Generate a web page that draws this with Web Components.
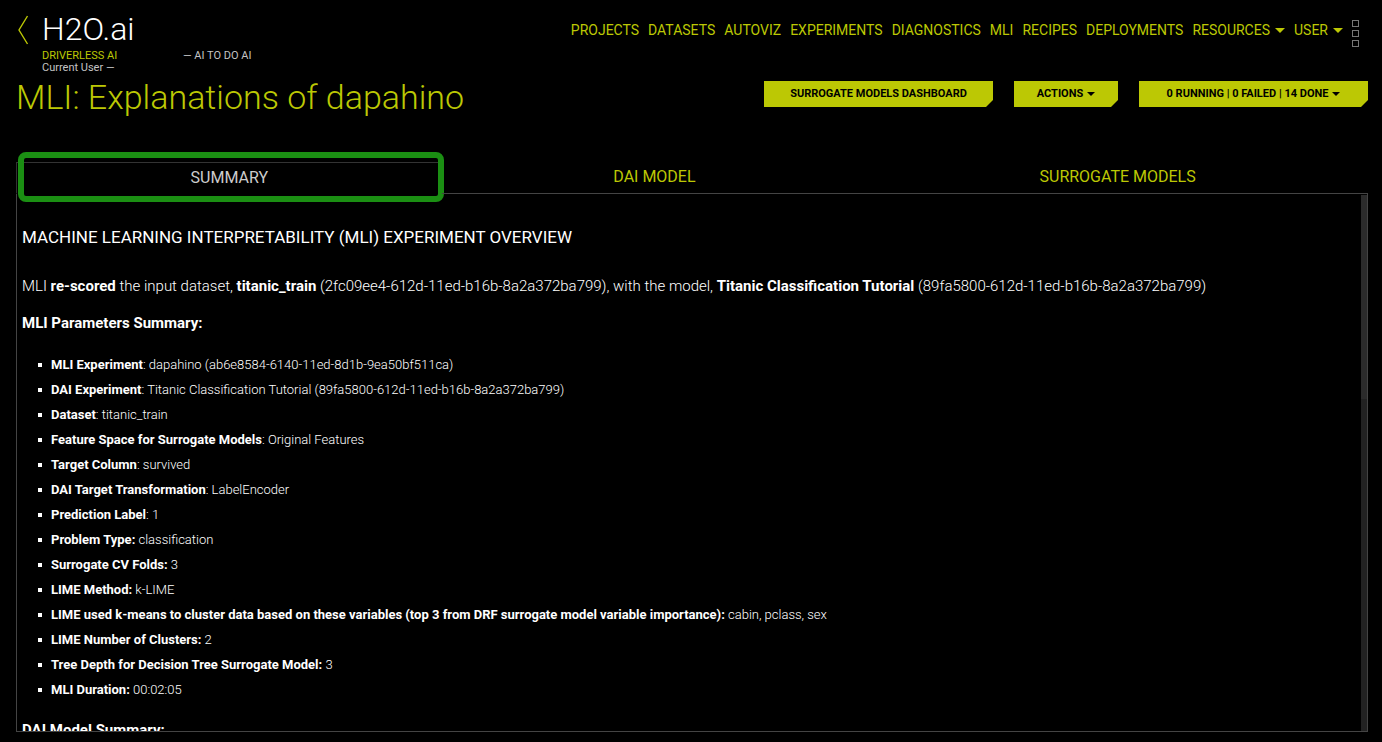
<!DOCTYPE html>
<html lang="en">
<head>
<meta charset="utf-8">
<meta name="viewport" content="width=device-width, initial-scale=1">
<title>H2O.ai Driverless AI</title>
<style>
  :root {
    --accent: #bcc804;
    --line: #444;
  }
  body {
    margin: 0;
    background: #000;
    color: #fff;
    font-family: Roboto, sans-serif;
  }
</style>
</head>
<body>
<mli-page></mli-page>

<script>
class BaseElement extends HTMLElement {
  constructor() {
    super();
    this.attachShadow({ mode: "open" }).innerHTML = this.render();
  }
}

customElements.define("brand-mark", class extends BaseElement {
  render() {
    return `<style>
      :host { display: flex; gap: 12px; padding-left: 2px; }
      a { display: block; height: 30px; margin-top: 15px; }
      svg { display: block; }
      .logo { font-size: 32px; line-height: 34px; height: 36px; color: #fff; padding-top: 12px; font-weight: 300; }
      .tags { display: grid; grid-template-columns: 141px auto; font-size: 11px; line-height: 12px; color: #c4c4c4; padding-top: 2px; }
      .product { color: var(--accent); }
    </style>
    <a href="#back" aria-label="Back"><svg width="12" height="30" viewBox="0 0 12 30" fill="none" stroke="#bcc804" stroke-width="1.4"><path d="M9.500 1 1 15 9.500 29"/></svg></a>
    <div>
      <div class="logo">H2O.ai</div>
      <div class="tags"><span class="product">DRIVERLESS AI</span><span>— AI TO DO AI</span><span>Current User —</span></div>
    </div>`;
  }
});

customElements.define("nav-link", class extends BaseElement {
  render() {
    const caret = this.hasAttribute("menu")
      ? `<svg width="10" height="5" viewBox="0 0 10 5"><path fill="currentColor" d="M0 0H10L5 5Z"/></svg>` : "";
    return `<style>
      :host { display: block; }
      a { display: flex; align-items: center; gap: 5px; color: var(--accent); text-decoration: none; font-size: 14px; line-height: 20px; white-space: nowrap; }
    </style><a href="#"><slot></slot>${caret}</a>`;
  }
});

customElements.define("main-nav", class extends BaseElement {
  render() {
    return `<style>
      :host { display: block; }
      nav { display: flex; gap: 9px; align-items: start; padding-top: 20px; }
      button { display: grid; gap: 3px; padding: 0; border: 0; background: none; }
      i { width: 5px; height: 5px; border: 1px solid #777; }
    </style>
    <nav aria-label="Main">
      <nav-link>PROJECTS</nav-link><nav-link>DATASETS</nav-link><nav-link>AUTOVIZ</nav-link>
      <nav-link>EXPERIMENTS</nav-link><nav-link>DIAGNOSTICS</nav-link><nav-link>MLI</nav-link>
      <nav-link>RECIPES</nav-link><nav-link>DEPLOYMENTS</nav-link>
      <nav-link menu>RESOURCES</nav-link><nav-link menu>USER</nav-link>
      <button aria-label="More"><i></i><i></i><i></i></button>
    </nav>`;
  }
});

customElements.define("cut-button", class extends BaseElement {
  render() {
    const caret = this.hasAttribute("menu")
      ? `<svg width="8" height="4" viewBox="0 0 8 4"><path fill="currentColor" d="M0 0H8L4 4Z"/></svg>` : "";
    return `<style>
      :host { display: block; }
      button { display: flex; align-items: center; justify-content: center; gap: 4px; width: 100%; height: 26px; padding: 0; border: 0;
        background: var(--accent); color: #000; font: bold 11px/16px Roboto, sans-serif; white-space: nowrap;
        clip-path: polygon(0 0, 100% 0, 100% 19px, calc(100% - 7px) 100%, 0 100%); }
    </style><button><span><slot></slot></span>${caret}</button>`;
  }
});

customElements.define("tab-bar", class extends BaseElement {
  render() {
    return `<style>
      :host { display: block; }
      div { display: grid; grid-template-columns: 17fr 17fr 20fr; height: 32px; }
      button { position: relative; padding: 0 0 1px; border: 0; border-bottom: 1px solid var(--line); background: none;
        color: var(--accent); font: 16px/28px Roboto, sans-serif; }
      button[aria-selected=true] { color: #ccc; border: 1px solid #333; border-bottom-color: transparent; border-right: 0; }
      /* Focus frame sits over the neighbouring edges. */
      button[aria-selected=true]::after { content: ""; position: absolute; inset: -11px -2px -9px 1px; border: 6px solid #1b8f13; border-radius: 8px; }
    </style>
    <div role="tablist">
      <button role="tab" aria-selected="true">SUMMARY</button>
      <button role="tab" aria-selected="false">DAI MODEL</button>
      <button role="tab" aria-selected="false">SURROGATE MODELS</button>
    </div>`;
  }
});

customElements.define("param-item", class extends BaseElement {
  render() {
    return `<style>
      :host { display: flex; align-items: center; gap: 9px; font-size: 13px; line-height: 25px; font-weight: 300; }
      i { width: 4px; height: 4px; background: #fff; }
      b { font-weight: 700; }
    </style><i></i><span><b><slot name="label"></slot></b><slot></slot></span>`;
  }
});

customElements.define("summary-panel", class extends BaseElement {
  render() {
    const rows = [
      ["MLI Experiment", ": dapahino (ab6e8584-6140-11ed-8d1b-9ea50bf511ca)"],
      ["DAI Experiment", ": Titanic Classification Tutorial (89fa5800-612d-11ed-b16b-8a2a372ba799)"],
      ["Dataset", ": titanic_train"],
      ["Feature Space for Surrogate Models", ": Original Features"],
      ["Target Column", ": survived"],
      ["DAI Target Transformation", ": LabelEncoder"],
      ["Prediction Label", ": 1"],
      ["Problem Type:", " classification"],
      ["Surrogate CV Folds:", " 3"],
      ["LIME Method:", " k-LIME"],
      ["LIME used k-means to cluster data based on these variables (top 3 from DRF surrogate model variable importance):", " cabin, pclass, sex"],
      ["LIME Number of Clusters:", " 2"],
      ["Tree Depth for Decision Tree Surrogate Model:", " 3"],
      ["MLI Duration:", " 00:02:05"]
    ].map(([k, v]) => `<param-item role="listitem"><span slot="label">${k}</span>${v}</param-item>`).join("");
    return `<style>
      :host { display: flex; min-height: 0; border: 1px solid var(--line); border-top: 0; padding-top: 1px; }
      .content { flex: 1; overflow: auto; scrollbar-width: none; padding-left: 5px; }
      h2 { margin: 30px 0 0; font-size: 17px; line-height: 24px; font-weight: normal; }
      p { margin: 25px 0 0; font-size: 15px; line-height: 24px; font-weight: 300; }
      h3 { margin: 13px 0 0; font-size: 15px; line-height: 24px; }
      b { font-weight: 700; }
      .list { padding: 17px 0 3px 16px; }
      .track { width: 6px; background: #222; }
      .thumb { height: 38%; background: #2b2b2b; }
    </style>
    <div class="content" role="tabpanel">
      <h2>MACHINE LEARNING INTERPRETABILITY (MLI) EXPERIMENT OVERVIEW</h2>
      <p>MLI <b>re-scored</b> the input dataset, <b>titanic_train</b> (2fc09ee4-612d-11ed-b16b-8a2a372ba799), with the model, <b>Titanic Classification Tutorial</b> (89fa5800-612d-11ed-b16b-8a2a372ba799)</p>
      <h3>MLI Parameters Summary:</h3>
      <div class="list" role="list">${rows}</div>
      <h3>DAI Model Summary:</h3>
    </div>
    <div class="track"><div class="thumb"></div></div>`;
  }
});

customElements.define("mli-page", class extends BaseElement {
  render() {
    return `<style>
      :host { display: flex; flex-direction: column; height: 100vh; box-sizing: border-box; padding: 0 14px 10px 16px; }
      header { display: flex; justify-content: space-between; height: 75px; }
      .heading { display: flex; justify-content: space-between; height: 87px; }
      h1 { margin: 0; font: 300 34px/44px Roboto, sans-serif; color: var(--accent); }
      .actions { display: grid; grid-template-columns: 229px 104px 229px; gap: 21px; padding-top: 6px; align-items: start; }
      main-nav { margin-right: 9px; }
      summary-panel { flex: 1; }
    </style>
    <header><brand-mark></brand-mark><main-nav></main-nav></header>
    <div class="heading">
      <h1>MLI: Explanations of dapahino</h1>
      <div class="actions">
        <cut-button>SURROGATE MODELS DASHBOARD</cut-button>
        <cut-button menu>ACTIONS</cut-button>
        <cut-button menu>0 RUNNING | 0 FAILED | 14 DONE</cut-button>
      </div>
    </div>
    <tab-bar></tab-bar>
    <summary-panel></summary-panel>`;
  }
});
</script>
</body>
</html>
